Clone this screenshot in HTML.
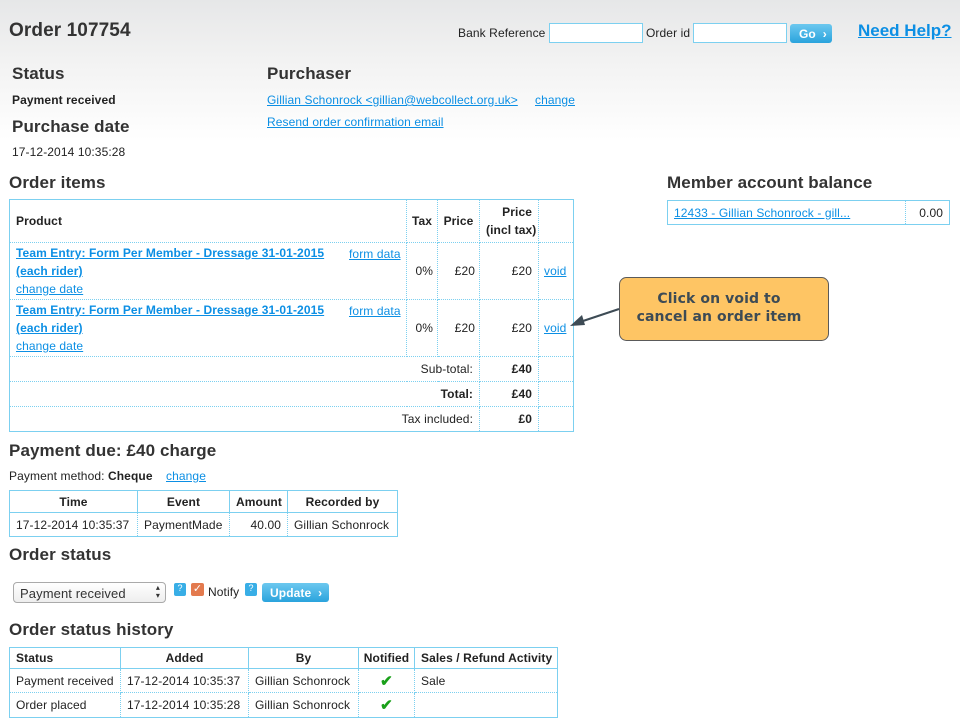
<!DOCTYPE html>
<html><head><meta charset="utf-8"><style>
*{margin:0;padding:0;box-sizing:border-box}
body{width:960px;height:727px;overflow:hidden;font-family:"Liberation Sans",sans-serif;font-size:12px;color:#222;background:linear-gradient(#e6e7e8 0px,#f2f2f2 60px,#fff 140px);position:relative;letter-spacing:0.1px}
.a{position:absolute;white-space:nowrap}
h1,h2{position:absolute;white-space:nowrap;font-weight:bold;color:#333}
h1{font-size:19px}
h2{font-size:17px}
a{color:#0c8fe4;text-decoration:underline}
table{position:absolute;border-collapse:collapse;table-layout:fixed;font-size:12px}
td,th{border:1px dotted #7cd0f0;padding:0 6px;overflow:hidden;white-space:nowrap}
table.s{border:1px solid #7cd0f0}
th{font-weight:bold;color:#222}
.hs th{border:1px solid #7cd0f0}
.inp{position:absolute;height:20px;border:1px solid #7cd0f0;background:#fff}
.btn{position:absolute;background:linear-gradient(#6cc8ef,#2aa3dd);color:#fff;font-weight:bold;border-radius:3px;font-size:12px}
.r{text-align:right}.c{text-align:center}
.ck{color:#1aa01a;font-size:15px;font-weight:bold}
</style></head><body>
<h1 style="left:9px;top:20px">Order 107754</h1>
<div class="a" style="left:458px;top:26px">Bank Reference</div>
<div class="inp" style="left:549px;top:23px;width:94px"></div>
<div class="a" style="left:646px;top:26px">Order id</div>
<div class="inp" style="left:693px;top:23px;width:94px"></div>
<div class="btn" style="left:790px;top:24px;width:42px;height:19px;padding:3px 0 0 9px">Go &nbsp;›</div>
<a class="a" href="#" style="left:858px;top:21px;font-size:17px;font-weight:bold;letter-spacing:0">Need Help?</a>

<h2 style="left:12px;top:64px">Status</h2>
<div class="a" style="left:12px;top:93px;font-weight:bold">Payment received</div>
<h2 style="left:12px;top:117px">Purchase date</h2>
<div class="a" style="left:12px;top:145px">17-12-2014 10:35:28</div>
<h2 style="left:267px;top:64px">Purchaser</h2>
<a class="a" href="#" style="left:267px;top:93px">Gillian Schonrock &lt;gillian@webcollect.org.uk&gt; </a>
<a class="a" href="#" style="left:535px;top:93px">change</a>
<a class="a" href="#" style="left:267px;top:115px">Resend order confirmation email</a>

<h2 style="left:9px;top:173px">Order items</h2>
<table class="s" style="left:9px;top:199px;width:564px">
<col style="width:397px"><col style="width:31px"><col style="width:42px"><col style="width:59px"><col style="width:35px">
<tr style="height:43px"><th style="text-align:left">Product</th><th style="padding:0 4px">Tax</th><th style="padding:0 4px">Price</th><th class="r" style="line-height:18px">Price<br>(incl tax)</th><th></th></tr>
<tr style="height:57px"><td style="line-height:18px;position:relative"><a href="#" style="font-weight:bold">Team Entry: Form Per Member - Dressage 31-01-2015<br>(each rider) </a><br><a href="#">change date</a><a href="#" style="position:absolute;left:339px;top:2px">form data</a></td><td class="r" style="padding:0 4px">0%</td><td class="r" style="padding:0 4px">£20</td><td class="r">£20</td><td style="padding:0 5px"><a href="#">void</a></td></tr>
<tr style="height:57px"><td style="line-height:18px;position:relative"><a href="#" style="font-weight:bold">Team Entry: Form Per Member - Dressage 31-01-2015<br>(each rider) </a><br><a href="#">change date</a><a href="#" style="position:absolute;left:339px;top:2px">form data</a></td><td class="r" style="padding:0 4px">0%</td><td class="r" style="padding:0 4px">£20</td><td class="r">£20</td><td style="padding:0 5px"><a href="#">void</a></td></tr>
<tr style="height:25px"><td colspan="3" class="r">Sub-total:</td><td class="r"><b>£40</b></td><td></td></tr>
<tr style="height:25px"><td colspan="3" class="r"><b>Total:</b></td><td class="r"><b>£40</b></td><td></td></tr>
<tr style="height:25px"><td colspan="3" class="r">Tax included:</td><td class="r"><b>£0</b></td><td></td></tr>
</table>

<h2 style="left:667px;top:173px">Member account balance</h2>
<table class="s" style="left:667px;top:200px;width:282px"><col style="width:238px"><col style="width:44px">
<tr style="height:24px"><td><a href="#">12433 - Gillian Schonrock - gill...</a></td><td class="r">0.00</td></tr></table>

<svg class="a" style="left:560px;top:270px" width="280" height="80">
<rect x="59.5" y="7.5" width="209" height="63" rx="7" fill="#fec564" stroke="#5a5a5a"/>
<line x1="59" y1="39" x2="20" y2="52" stroke="#3d4b55" stroke-width="2"/>
<polygon points="10,56 22,45 25,55" fill="#3d4b55"/>
<text x="159" y="33" text-anchor="middle" font-family="DejaVu Sans" font-weight="bold" font-size="14" fill="#3d4b55">Click on void to</text>
<text x="159" y="51" text-anchor="middle" font-family="DejaVu Sans" font-weight="bold" font-size="14" fill="#3d4b55">cancel an order item</text>
</svg>

<h2 style="left:9px;top:441px">Payment due: £40 charge</h2>
<div class="a" style="left:9px;top:469px">Payment method: <b>Cheque</b></div>
<a class="a" href="#" style="left:166px;top:469px">change</a>
<table class="s hs" style="left:9px;top:490px;width:388px">
<col style="width:128px"><col style="width:92px"><col style="width:58px"><col style="width:110px">
<tr style="height:22px"><th>Time</th><th>Event</th><th>Amount</th><th>Recorded by</th></tr>
<tr style="height:24px"><td>17-12-2014 10:35:37</td><td>PaymentMade</td><td class="r">40.00</td><td>Gillian Schonrock</td></tr></table>

<h2 style="left:9px;top:545px">Order status</h2>
<div class="a" style="left:13px;top:582px;width:153px;height:21px;border:1px solid #aaa;border-radius:4px;background:linear-gradient(#fff,#eee);padding:3px 6px;font-size:13px;color:#333">Payment received<span style="position:absolute;right:5px;top:1px;font-size:8px;line-height:8px">▴<br>▾</span></div>
<div class="a" style="left:174px;top:583px;width:12px;height:13px;background:#38aee6;color:#fff;font-size:9px;text-align:center;border-radius:2px">?</div>
<div class="a" style="left:191px;top:583px;width:13px;height:13px;background:#e37a4e;border-radius:2px;color:#fff;font-size:11px;line-height:12px;text-align:center">✓</div>
<div class="a" style="left:208px;top:585px">Notify</div>
<div class="a" style="left:245px;top:583px;width:12px;height:13px;background:#38aee6;color:#fff;font-size:9px;text-align:center;border-radius:2px">?</div>
<div class="btn" style="left:262px;top:583px;width:67px;height:19px;padding:3px 0 0 8px">Update &nbsp;›</div>

<h2 style="left:9px;top:620px">Order status history</h2>
<table class="s hs" style="left:9px;top:647px;width:548px">
<col style="width:111px"><col style="width:128px"><col style="width:110px"><col style="width:56px"><col style="width:143px">
<tr style="height:21px"><th style="text-align:left">Status</th><th>Added</th><th>By</th><th style="padding:0 4px">Notified</th><th style="text-align:left">Sales / Refund Activity</th></tr>
<tr style="height:24px"><td>Payment received</td><td>17-12-2014 10:35:37</td><td>Gillian Schonrock</td><td class="c ck">✔</td><td>Sale</td></tr>
<tr style="height:25px"><td>Order placed</td><td>17-12-2014 10:35:28</td><td>Gillian Schonrock</td><td class="c ck">✔</td><td></td></tr>
</table>
</body></html>
